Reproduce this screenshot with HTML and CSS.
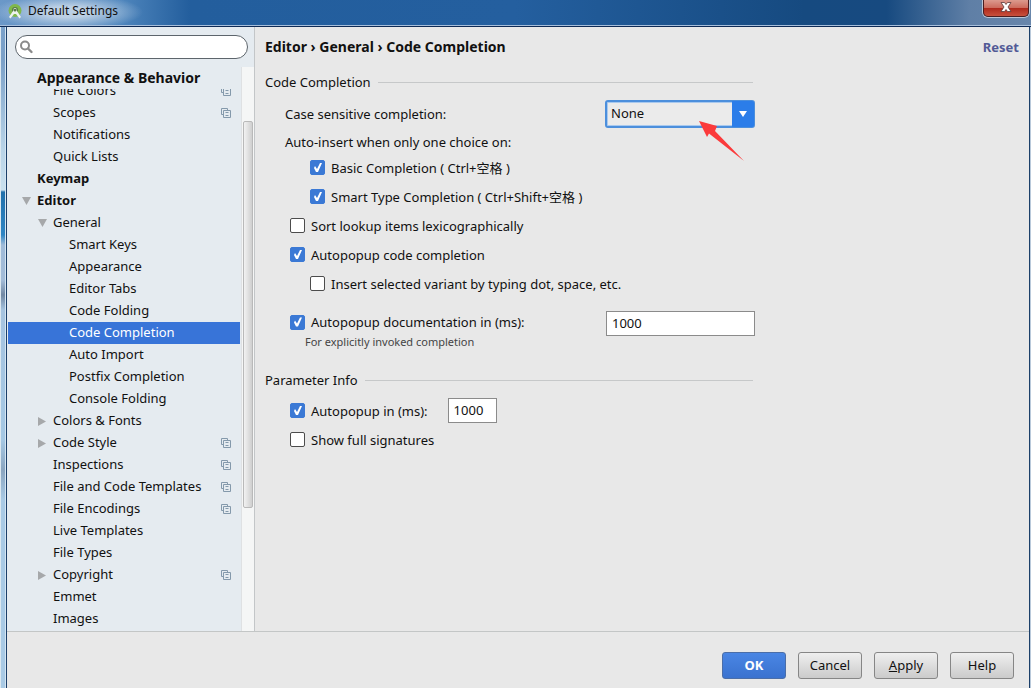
FILE: index.html
```html
<!DOCTYPE html>
<html lang="en">
<head>
<meta charset="utf-8">
<title>Default Settings</title>
<link rel="stylesheet" href="styles.css">
</head>
<body>
<svg class="defs" width="0" height="0" aria-hidden="true">
  <symbol id="copy" viewBox="0 0 10 10">
    <path d="M2.5 6.5h-2v-6h6v2M2.5 2.5h7v7h-7zM4.5 4.5h3M4.5 7.5h3" fill="none" stroke="#8499ab"/>
  </symbol>
  <symbol id="open" viewBox="0 0 10 10"><path d="M1 1h9L5.500 9z" fill="#a6a8aa"/></symbol>
  <symbol id="closed" viewBox="0 0 10 10"><path d="M1 1v9l8-4.500z" fill="#a6a8aa"/></symbol>
</svg>
<div class="window">
  <header class="titlebar">
    <svg class="logo" viewBox="0 0 14 15" width="14" height="15" aria-hidden="true">
      <circle cx="7" cy="6.500" r="6.500" fill="#7fb84c"/>
      <circle cx="7" cy="6" r="3" fill="#587b48"/>
      <path d="M6 4h2l1 3 4 6-1.500 1.500L8 10H6l-3.500 4.500L1 13l4-6z" fill="#eef3ee"/>
      <circle cx="7" cy="6" r="1.500" fill="#587b48"/>
    </svg>
    <span class="title">Default Settings</span>
    <button class="close" type="button" aria-label="Close">
      <svg viewBox="0 0 12 10" width="12" height="10" aria-hidden="true"><path d="M1 .5h3.500L6 2.500 7.500.5H11L8 5l3 4.500H7.500L6 7.500 4.500 9.500H1L4 5z" fill="#fff" stroke="#5c3a3a" stroke-width=".8"/></svg>
    </button>
  </header>
  <div class="content">
    <aside class="sidebar">
      <div class="search">
        <svg viewBox="0 0 14 14" width="14" height="14" aria-hidden="true"><circle cx="5" cy="5.500" r="4" fill="none" stroke="#8a8a8a" stroke-width="2"/><path d="M8 8.500l3.500 3.500" stroke="#8a8a8a" stroke-width="2.400" stroke-linecap="round"/></svg>
        <input type="text" aria-label="Search settings">
      </div>
      <div class="browser">
        <nav class="tree" aria-label="Settings">
          <a class="row sticky" href="#">Appearance &amp; Behavior</a>
          <div class="viewport">
            <div class="scrolled">
              <a class="row l2" href="#">File Colors<svg class="copy"><use href="#copy"/></svg></a>
              <a class="row l2" href="#">Scopes<svg class="copy"><use href="#copy"/></svg></a>
              <a class="row l2" href="#">Notifications</a>
              <a class="row l2" href="#">Quick Lists</a>
              <a class="row top" href="#">Keymap</a>
              <a class="row top branch" href="#"><svg class="arrow"><use href="#open"/></svg>Editor</a>
              <a class="row l2 branch" href="#"><svg class="arrow"><use href="#open"/></svg>General</a>
              <a class="row l3" href="#">Smart Keys</a>
              <a class="row l3" href="#">Appearance</a>
              <a class="row l3" href="#">Editor Tabs</a>
              <a class="row l3" href="#">Code Folding</a>
              <a class="row l3 selected" href="#" aria-current="page">Code Completion</a>
              <a class="row l3" href="#">Auto Import</a>
              <a class="row l3" href="#">Postfix Completion</a>
              <a class="row l3" href="#">Console Folding</a>
              <a class="row l2 branch" href="#"><svg class="arrow"><use href="#closed"/></svg>Colors &amp; Fonts</a>
              <a class="row l2 branch" href="#"><svg class="arrow"><use href="#closed"/></svg>Code Style<svg class="copy"><use href="#copy"/></svg></a>
              <a class="row l2" href="#">Inspections<svg class="copy"><use href="#copy"/></svg></a>
              <a class="row l2" href="#">File and Code Templates<svg class="copy"><use href="#copy"/></svg></a>
              <a class="row l2" href="#">File Encodings<svg class="copy"><use href="#copy"/></svg></a>
              <a class="row l2" href="#">Live Templates</a>
              <a class="row l2" href="#">File Types</a>
              <a class="row l2 branch" href="#"><svg class="arrow"><use href="#closed"/></svg>Copyright<svg class="copy"><use href="#copy"/></svg></a>
              <a class="row l2" href="#">Emmet</a>
              <a class="row l2" href="#">Images</a>
            </div>
          </div>
        </nav>
        <div class="scrollbar"><div class="thumb"></div></div>
      </div>
    </aside>
    <main class="panel">
      <div class="heading">
        <h1>Editor › General › Code Completion</h1>
        <a class="reset" href="#">Reset</a>
      </div>
      <form class="form">
        <section>
          <h2>Code Completion</h2>
          <div class="field case">
            <label for="case">Case sensitive completion:</label>
            <div class="combo">
              <select id="case"><option>None</option><option>All</option><option>First letter</option></select>
              <span class="drop"><svg viewBox="0 0 8 6" width="8" height="6" aria-hidden="true"><path d="M0 0h8L4 6z" fill="#fff"/></svg></span>
              <svg class="pointer" viewBox="0 0 46 40" width="46" height="40" aria-hidden="true"><path d="M0 0l18 5-2 5 29 30L10 12.500 8 16z" fill="#fb3a3b"/></svg>
            </div>
          </div>
          <p class="caption">Auto-insert when only one choice on:</p>
          <label class="check deep"><input type="checkbox" checked>Basic Completion ( Ctrl+空格 )</label>
          <label class="check deep"><input type="checkbox" checked>Smart Type Completion ( Ctrl+Shift+空格 )</label>
          <label class="check"><input type="checkbox">Sort lookup items lexicographically</label>
          <label class="check"><input type="checkbox" checked>Autopopup code completion</label>
          <label class="check deep"><input type="checkbox">Insert selected variant by typing dot, space, etc.</label>
          <div class="field docs">
            <div>
              <label class="check short"><input type="checkbox" checked>Autopopup documentation in (ms):</label>
              <p class="hint">For explicitly invoked completion</p>
            </div>
            <input class="text wide" type="text" value="1000" aria-label="Documentation delay in ms">
          </div>
        </section>
        <section>
          <h2>Parameter Info</h2>
          <div class="field delay">
            <label class="check short"><input type="checkbox" checked>Autopopup in (ms):</label>
            <input class="text" type="text" value="1000" aria-label="Parameter info delay in ms">
          </div>
          <label class="check"><input type="checkbox">Show full signatures</label>
        </section>
      </form>
    </main>
  </div>
  <footer class="actions">
    <button class="button primary" type="button">OK</button>
    <button class="button" type="button">Cancel</button>
    <button class="button" type="button"><u>A</u>pply</button>
    <button class="button" type="button">Help</button>
  </footer>
</div>
</body>
</html>
```
FILE: styles.css
```css
* { box-sizing: border-box; }

body {
  margin: 0;
  font: 13px/20px "Noto Sans", "Noto Sans CJK SC", sans-serif;
  color: #111;
}

h1, h2, p { margin: 0; font-size: inherit; }
a { color: inherit; text-decoration: none; }
button, input, select { font: inherit; color: inherit; }
.defs { position: absolute; }

.window {
  display: flex;
  flex-direction: column;
  height: 100vh;
  padding: 0 2px 0 7px;
  background:
    linear-gradient(270deg, #b9c9da 1px, #1b3f69 1px, #1b3f69 2px, transparent 2px),
    linear-gradient(90deg, #dce8f0 1px, transparent 1px, transparent 5px, #d5e5f2 5px, #d5e5f2 6px, #1b3f69 6px, #1b3f69 7px, transparent 7px),
    linear-gradient(#7ba3cc 0, #7aa0c8 60px, #b9d4e8 150px, #c9e0ee 190px, #2170ab 192px, #2f86c4 235px, #9fbbd9 245px, #a3bcd8 280px, #7188a3 295px, #a6c4e0 310px, #a5c8e4 440px, #8aa5c0 470px, #a9cae5 500px, #a9cae5 100%);
}

.titlebar {
  flex: none;
  display: flex;
  align-items: center;
  gap: 6px;
  height: 27px;
  margin: 0 -2px 0 -7px;
  padding: 0 2px 4px 8px;
  border-bottom: 1px solid #0e2a55;
  box-shadow: inset 0 -1px #a7bfdc;
  background:
    radial-gradient(ellipse 75px 18px at 68px 12px, rgba(205, 220, 235, .85) 30%, rgba(205, 220, 235, 0)),
    linear-gradient(90deg, #6b98c8 0, #4f86bd 120px, #235e9d 190px, #245f9f 50%, #164a80 78%, #174a80 86%, #5f7fa6 94%, #6886ab);
}

.title { flex: 1; font-size: 12px; }

.close {
  align-self: flex-start;
  display: flex;
  align-items: center;
  justify-content: center;
  width: 46px;
  height: 17px;
  padding: 0 0 3px;
  border: 1px solid #4b1d20;
  border-top: 0;
  border-radius: 0 0 5px 5px;
  background: linear-gradient(#dc9a8e, #cc6a5c 50%, #b02a1d 52%, #c8503c);
  box-shadow: 0 0 0 1px #b9c4d4;
}

.content { flex: 1; display: flex; min-height: 0; }

.sidebar {
  flex: none;
  display: flex;
  flex-direction: column;
  width: 248px;
  border-right: 1px solid #c3c6c8;
  background: #e5ebf0;
}

.search {
  flex: none;
  display: flex;
  align-items: center;
  gap: 4px;
  height: 24px;
  margin: 8px 6px 8px 8px;
  padding: 0 8px 0 4px;
  border: 1px solid #5d656c;
  border-radius: 12px;
  background: #fff;
}

.search input {
  flex: 1;
  min-width: 0;
  border: 0;
  outline: 0;
  padding: 0;
  background: none;
}

.browser { flex: 1; display: flex; min-height: 0; }
.tree { flex: 1; display: flex; flex-direction: column; min-width: 0; padding-left: 1px; }
.viewport { flex: 1; min-height: 0; margin-right: 1px; overflow: hidden; }
.scrolled { margin-top: -9px; }

.row {
  display: flex;
  align-items: center;
  gap: 6px;
  height: 22px;
  padding: 0 9px 2px 45px;
  white-space: nowrap;
}

.row.top { padding-left: 29px; font-weight: bold; }
.row.sticky { flex: none; padding: 0 0 0 29px; font-size: 14px; font-weight: bold; }
.row.l3 { padding-left: 61px; }
.row.branch { padding-left: 29px; }
.row.top.branch { padding-left: 13px; }
.row.selected { background: #3874d8; color: #fff; }
.arrow { flex: none; width: 10px; height: 10px; margin-top: 2px; }
.copy { width: 10px; height: 10px; margin: 2px 0 0 auto; }

.scrollbar {
  width: 13px;
  padding: 54px 1px 0;
  border-left: 1px solid #dfe1e3;
  background: #f5f6f6;
}

.thumb {
  height: 387px;
  border: 1px solid #b9b9b9;
  border-radius: 2px;
  background: linear-gradient(90deg, #f2f2f2, #cfcfcf);
}

.panel { flex: 1; min-width: 0; padding: 10px 10px 0; background: #e8e8e8; }
.heading { display: flex; justify-content: space-between; font-weight: bold; }
h1 { font-size: 14px; }
.reset { color: #525a96; }
.form { max-width: 490px; padding-top: 15px; }

h2 {
  display: flex;
  align-items: center;
  gap: 7px;
  margin: 0 2px 8px 0;
  font-weight: normal;
}

h2::after { content: ""; flex: 1; height: 1px; background: #c6c8c9; }

.field { display: flex; justify-content: space-between; align-items: center; }
.case, .caption { padding-left: 20px; }
.caption { height: 25px; line-height: 28px; }

.combo { position: relative; display: flex; width: 150px; height: 28px; }

.combo select {
  flex: 1;
  appearance: none;
  padding: 0 4px 2px;
  border: 2px solid #4c8fdc;
  border-radius: 3px;
  outline: 0;
  background: #ebebeb;
  box-shadow: inset 0 0 0 1px #a9c9ee;
}

.drop {
  position: absolute;
  inset: 1px 1px 1px auto;
  display: flex;
  align-items: center;
  justify-content: center;
  width: 22px;
  border-radius: 0 2px 2px 0;
  background: #2b7de9;
  pointer-events: none;
}

.pointer { position: absolute; left: 94px; top: 21px; pointer-events: none; }

.check {
  display: flex;
  align-items: center;
  gap: 6px;
  height: 29px;
  padding-left: 25px;
}

.check.deep { padding-left: 45px; }
.check.short { height: 22px; }

.check input {
  appearance: none;
  flex: none;
  width: 15px;
  height: 15px;
  margin: 0;
  border: 1px solid #4c4c4c;
  border-radius: 2px;
  background: #fff;
}

.check input:checked { border-color: #3b79d5; background: #3b79d5; }

.check input:checked::before {
  content: "";
  display: block;
  width: 13px;
  height: 13px;
  background: #fff;
  clip-path: polygon(3px 7px, 4px 5px, 6px 8px, 9px 2px, 11px 2px, 7px 11px, 5px 11px);
}

.docs { align-items: flex-start; margin-top: 13px; }
.hint { padding-left: 40px; font-size: 11px; line-height: 18px; color: #444; }

.text {
  width: 49px;
  height: 25px;
  padding: 0 5px 2px;
  border: 1px solid #8b8b8b;
  outline: 0;
  background: #fff;
}

.text.wide { width: 149px; }
section + section { margin-top: 19px; }
.delay { justify-content: flex-start; gap: 20px; margin-bottom: 2px; }

.actions {
  flex: none;
  display: flex;
  justify-content: flex-end;
  gap: 12px;
  padding: 20px 15px 9px;
  border-top: 1px solid #c3c6c6;
  background: #e8e8e8;
}

.button {
  width: 64px;
  height: 27px;
  padding: 0 0 2px;
  border: 1px solid #868686;
  border-radius: 3px;
  background: linear-gradient(#efefef, #cbcbcb);
}

.button.primary {
  border-color: #4b6ea8;
  background: linear-gradient(#4a86e4, #3a72cf);
  color: #fff;
  font-weight: bold;
}
```
